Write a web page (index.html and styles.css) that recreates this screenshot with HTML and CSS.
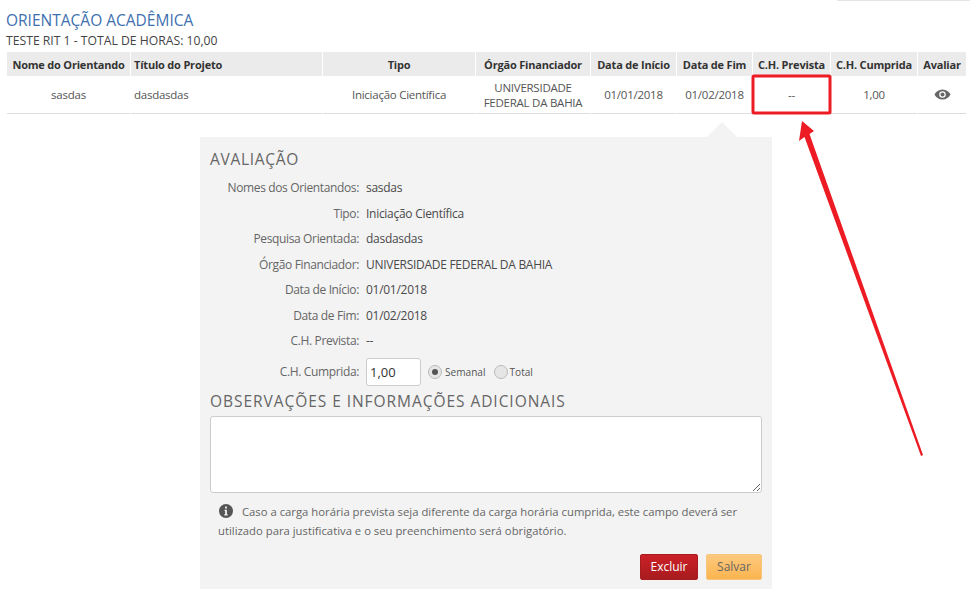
FILE: index.html

```html
<!DOCTYPE html>
<html lang="pt-BR">
<head>
    <meta charset="UTF-8">
    <title>Orientação Acadêmica</title>
    <link rel="stylesheet" href="styles.css">
</head>
<body>
    <div class="top-line"></div>

    <h1 class="page-title">ORIENTAÇÃO ACADÊMICA</h1>
    <div class="subtitle">TESTE RIT 1 - TOTAL DE HORAS: 10,00</div>

    <table class="grid">
        <colgroup>
            <col class="c-nome">
            <col class="c-titulo">
            <col class="c-tipo">
            <col class="c-orgao">
            <col class="c-inicio">
            <col class="c-fim">
            <col class="c-prevista">
            <col class="c-cumprida">
            <col class="c-avaliar">
        </colgroup>
        <thead>
            <tr>
                <th>Nome do Orientando</th>
                <th class="left">Título do Projeto</th>
                <th>Tipo</th>
                <th>Órgão Financiador</th>
                <th>Data de Início</th>
                <th>Data de Fim</th>
                <th>C.H. Prevista</th>
                <th>C.H. Cumprida</th>
                <th>Avaliar</th>
            </tr>
        </thead>
        <tbody>
            <tr>
                <td>sasdas</td>
                <td class="left">dasdasdas</td>
                <td>Iniciação Científica</td>
                <td>UNIVERSIDADE FEDERAL DA BAHIA</td>
                <td>01/01/2018</td>
                <td>01/02/2018</td>
                <td>--</td>
                <td>1,00</td>
                <td>
                    <svg class="eye" viewBox="0 0 18 12" width="17" height="11">
                        <path fill-rule="evenodd" d="M9 .5C5 .5 1.800 2.900 .3 6c1.500 3.100 4.700 5.500 8.700 5.500s7.200-2.400 8.700-5.500C16.200 2.900 13 .5 9 .5zM9 2.400A3.600 3.600 0 1 1 9 9.600 3.600 3.600 0 0 1 9 2.400z"/>
                        <circle cx="9" cy="6" r="2.200"/>
                    </svg>
                </td>
            </tr>
        </tbody>
    </table>

    <div class="panel">
        <h2 class="panel-title">AVALIAÇÃO</h2>

        <div class="field"><span class="label">Nomes dos Orientandos:</span><span class="value">sasdas</span></div>
        <div class="field"><span class="label">Tipo:</span><span class="value">Iniciação Científica</span></div>
        <div class="field"><span class="label">Pesquisa Orientada:</span><span class="value">dasdasdas</span></div>
        <div class="field"><span class="label">Órgão Financiador:</span><span class="value">UNIVERSIDADE FEDERAL DA BAHIA</span></div>
        <div class="field"><span class="label">Data de Início:</span><span class="value">01/01/2018</span></div>
        <div class="field"><span class="label">Data de Fim:</span><span class="value">01/02/2018</span></div>
        <div class="field"><span class="label">C.H. Prevista:</span><span class="value">--</span></div>

        <div class="field field-input">
            <label class="label" for="cumprida">C.H. Cumprida:</label>
            <input type="text" id="cumprida" class="hours" value="1,00">
            <label class="radio"><span class="dot checked"></span>Semanal</label>
            <label class="radio"><span class="dot"></span>Total</label>
        </div>

        <h3 class="obs-title">OBSERVAÇÕES E INFORMAÇÕES ADICIONAIS</h3>
        <textarea class="obs"></textarea>

        <p class="hint">
            <svg class="info" viewBox="0 0 14 14" width="14" height="14">
                <path fill-rule="evenodd" d="M7 0a7 7 0 1 0 0 14A7 7 0 0 0 7 0zM7.900 2.400v2H6.100v-2zM5.500 5.800h2.400v4.400h.8v1.300H5.300v-1.300h.8V7.100h-.6z"/>
            </svg>
            Caso a carga horária prevista seja diferente da carga horária cumprida, este campo deverá ser utilizado para justificativa e o seu preenchimento será obrigatório.
        </p>

        <div class="actions">
            <button class="btn btn-red">Excluir</button>
            <button class="btn btn-yellow">Salvar</button>
        </div>
    </div>

    <!-- Annotation drawn on top of the screenshot -->
    <svg class="annotation" viewBox="0 0 970 593" width="970" height="593">
        <rect x="753" y="76" width="77" height="37" rx="1" fill="none" stroke="#ed1c24" stroke-width="3"/>
        <path d="M802 121L814 131 809.500 134 923 455 921 456 804.500 137 799 141z" fill="#ed1c24"/>
    </svg>
</body>
</html>
```

FILE: styles.css

```css
body {
    font-family: "Open Sans", sans-serif;
    font-size: 12px;
    margin: 0;
    padding: 0 4px 0 7px;
    color: #555;
    background: #fff;
    height: 593px;
    box-sizing: border-box;
    overflow: hidden;
    position: relative;
}

.top-line {
    height: 1px;
    width: 133px;
    margin-left: auto;
    margin-right: -4px;
    background: #e4e4e4;
}

.page-title {
    margin: 10px 0 0 -1px;
    font-size: 15.500px;
    line-height: 18px;
    font-weight: 400;
    color: #3d70ae;
}

.subtitle {
    margin: 4px 0 3px -1px;
    font-size: 12.200px;
    line-height: 16px;
    color: #444;
}

.grid {
    table-layout: fixed;
    width: 960px;
    border-collapse: separate;
    border-spacing: 1px 0;
    margin-left: -1px;
}

.c-nome { width: 123px; }
.c-titulo { width: 191px; }
.c-tipo { width: 152px; }
.c-orgao { width: 114px; }
.c-inicio { width: 85px; }
.c-fim { width: 75px; }
.c-prevista { width: 77px; }
.c-cumprida { width: 86px; }
.c-avaliar { width: 48px; }

.grid th {
    height: 24px;
    padding: 0;
    background: #ebebeb;
    font-size: 11px;
    font-weight: 700;
    letter-spacing: -.2px;
    color: #333;
    text-align: center;
    white-space: nowrap;
}

.grid td {
    height: 37px;
    padding: 0 2px;
    border-bottom: 1px solid #ddd;
    font-size: 11.500px;
    letter-spacing: -.25px;
    line-height: 15px;
    text-align: center;
    color: #555;
}

.grid .left {
    text-align: left;
    padding-left: 3px;
}

.eye {
    display: block;
    margin: 0 auto;
    fill: #666;
}

.panel {
    position: relative;
    width: 572px;
    height: 452px;
    box-sizing: border-box;
    margin: 23px 0 0 193px;
    padding: 12px 10px 0;
    background: #f3f3f3;
}

.panel::before {
    content: "";
    position: absolute;
    top: -15px;
    right: 35px;
    border-left: 15px solid transparent;
    border-right: 15px solid transparent;
    border-bottom: 15px solid #f3f3f3;
}

.panel-title {
    margin: 0 0 6px;
    font-size: 15.500px;
    line-height: 20px;
    font-weight: 400;
    letter-spacing: .7px;
    color: #666;
}

.field {
    display: flex;
    align-items: center;
    height: 25.500px;
}

.label {
    width: 149px;
    margin-right: 7px;
    flex: none;
    text-align: right;
    letter-spacing: -.36px;
    color: #666;
}

.value {
    letter-spacing: -.28px;
    color: #4a4a4a;
}

.field-input {
    height: 28px;
    margin-top: 4px;
}

.hours {
    width: 55px;
    height: 28px;
    box-sizing: border-box;
    padding: 0 3px;
    border: 1px solid #ccc;
    border-radius: 3px;
    background: #fff;
    font-family: inherit;
    font-size: 13px;
    color: #333;
}

.radio {
    display: flex;
    align-items: center;
    margin-left: 7px;
    font-size: 10.100px;
    color: #555;
}

.radio + .radio {
    margin-left: 8px;
}

.radio + .radio .dot {
    margin-right: 2px;
}

.dot {
    width: 12px;
    height: 12px;
    margin-right: 3px;
    border: 1px solid #bbb;
    border-radius: 50%;
    background: #e6e6e6;
    position: relative;
}

.dot.checked::after {
    content: "";
    position: absolute;
    top: 3px;
    left: 3px;
    width: 6px;
    height: 6px;
    border-radius: 50%;
    background: #555;
}

.obs-title {
    margin: 5px 0 5px;
    font-size: 15.500px;
    line-height: 20px;
    font-weight: 400;
    letter-spacing: .95px;
    color: #666;
}

.obs {
    display: block;
    width: 552px;
    height: 77px;
    box-sizing: border-box;
    border: 1px solid #ccc;
    border-radius: 3px;
    background: #fff;
}

.hint {
    margin: 9px 0 0;
    padding: 0 8px;
    font-size: 11.300px;
    line-height: 19px;
    color: #666;
}

.info {
    fill: #555;
    vertical-align: -2px;
    margin: 0 6px 0 1px;
}

.actions {
    display: flex;
    justify-content: flex-end;
    gap: 8px;
    margin-top: 14px;
}

.btn {
    height: 26px;
    box-sizing: border-box;
    padding: 0;
    border-radius: 2px;
    font-family: inherit;
    font-size: 12px;
    cursor: pointer;
}

.btn-red {
    width: 58px;
    border: 1px solid #a81c1f;
    background: linear-gradient(#cb2027, #a81c1f);
    color: #fff;
}

.btn-yellow {
    width: 56px;
    border: 1px solid #f7c57c;
    background: linear-gradient(#fdc97e, #fbb44f);
    color: #666;
}

.annotation {
    position: absolute;
    top: 0;
    left: 0;
    pointer-events: none;
}
```
